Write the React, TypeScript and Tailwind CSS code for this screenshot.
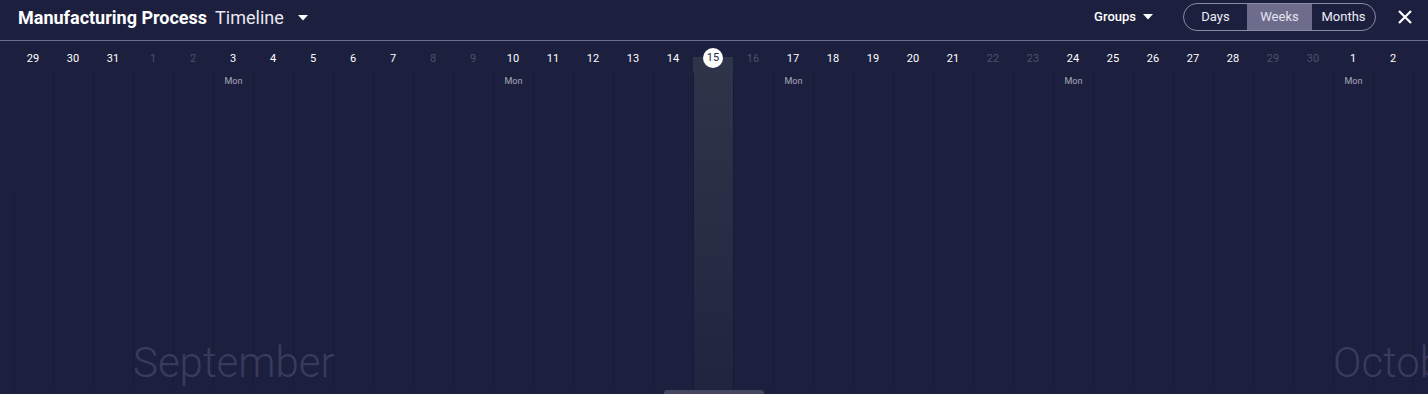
import React from 'react';

type Day = { n: number; weekend: boolean; monday: boolean; today: boolean };

const makeDays = (from: number, to: number, firstWeekday: number, todayN = -1): Day[] => {
  const out: Day[] = [];
  for (let n = from; n <= to; n++) {
    const wd = (firstWeekday + (n - 1)) % 7; // 0 = Sun
    out.push({ n, weekend: wd === 0 || wd === 6, monday: wd === 1, today: n === todayN });
  }
  return out;
};

// Aug 1 was a Wednesday, Sep 1 a Saturday, Oct 1 a Monday
const months = [
  { label: '', days: makeDays(28, 31, 3) },
  { label: 'September', days: makeDays(1, 30, 6, 15) },
  { label: 'October', days: makeDays(1, 3, 1) },
];

const Caret = () => (
  <svg width="10" height="6" viewBox="0 0 10 6" className="fill-white">
    <path d="M0 0h10L5 5.5z" />
  </svg>
);

const DayColumn = ({ day, first }: { day: Day; first?: boolean }) => (
  <div
    className={`flex w-[40px] flex-none flex-col ${
      day.today ? 'bg-[linear-gradient(to_bottom,transparent_16px,#2f3549_16px,#272b44_60%,#21243f)]' : ''
    }`}
  >
    <div className="flex h-[32px] justify-center pt-[8px]">
      {day.today ? (
        <div className="-mt-[1px] flex h-5 w-5 items-center justify-center rounded-full bg-white text-[11px] text-[#1d1f3f]">
          {day.n}
        </div>
      ) : (
        <div
          className={`flex h-5 items-center text-[11px] ${day.weekend ? 'text-[#4f5068]' : 'text-white'}`}
        >
          {day.n}
        </div>
      )}
    </div>
    <div
      className={`flex flex-1 justify-center border-l pt-[2px] ${
        first ? 'border-transparent bg-[linear-gradient(to_bottom,transparent_118px,#181a35_118px)] bg-[length:1px_100%] bg-no-repeat' : 'border-[#181a35]'
      }`}
    >
      {day.monday && <span className="text-[9px] leading-[12px] text-[#a9a9ba]">Mon</span>}
    </div>
  </div>
);

export default function App() {
  return (
    <div className="flex h-[394px] w-[1428px] flex-col overflow-hidden bg-[#1d1f3f] font-['Roboto',sans-serif]">
      <header className="flex h-[41px] flex-none items-start border-b border-[#6d6c8d] pl-[18px] pr-[16px] pt-[3px]">
        <div className="flex h-7 items-center">
          <span className="text-[18px] font-bold text-white">Manufacturing Process</span>
          <span className="ml-2 text-[18px] text-[#e8e8f0]">Timeline</span>
          <span className="ml-[14px] mt-[1px]">
            <Caret />
          </span>
        </div>
        <div className="flex-1" />
        <div className="flex h-7 items-center text-[13px] font-medium text-white">
          Groups
          <span className="ml-[7px]">
            <Caret />
          </span>
        </div>
        <div className="ml-[30px] flex h-[28px] overflow-hidden rounded-full border border-[#8b8aa4] text-[13px]">
          <button className="w-[63px] text-[#ececf4]">Days</button>
          <button className="w-[65px] bg-[#6d6c8c] text-[#e4e4ee]">Weeks</button>
          <button className="w-[63px] text-[#ececf4]">Months</button>
        </div>
        <div className="ml-[22px] flex h-7 items-center">
          <svg width="14" height="14" viewBox="0 0 14 14" className="stroke-white" strokeWidth="2.2">
            <path d="M1 1l12 12M13 1L1 13" />
          </svg>
        </div>
      </header>

      <div className="flex min-h-0 flex-1 flex-col">
        <div className="-ml-[27px] flex flex-1">
          {months.map((m, mi) => (
            <div key={m.label || 'aug'} className="relative flex">
              {m.days.map((d, di) => (
                <DayColumn key={d.n} day={d} first={mi === 0 && di === 1} />
              ))}
              {m.label && (
                <span className="pointer-events-none absolute bottom-[5px] left-0 whitespace-nowrap text-[42px] font-light leading-[42px] text-[#393b5c]">
                  {m.label}
                </span>
              )}
            </div>
          ))}
        </div>
        <div className="flex h-[5px] flex-none items-end justify-center">
          <div className="h-[4px] w-[100px] rounded-t-[3px] bg-[#46465f]" />
        </div>
      </div>
    </div>
  );
}
